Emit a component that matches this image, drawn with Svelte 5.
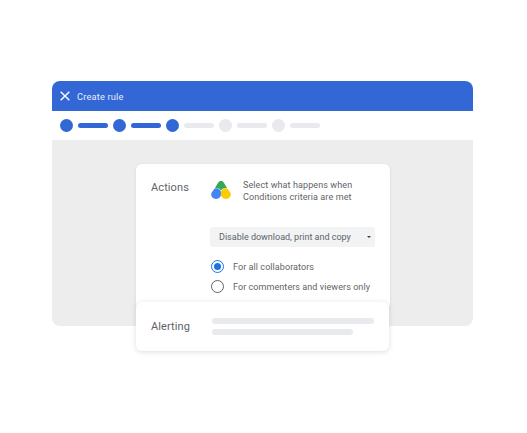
<script>
  const steps = [
    { done: true },
    { done: true },
    { done: true },
    { done: false },
    { done: false }
  ];
</script>

<main>
  <section class="window">
    <header class="titlebar">
      <svg class="close" viewBox="0 0 10 10" width="10" height="10" aria-hidden="true">
        <path d="M0.7 0.7 9.3 9.3M9.3 0.7 0.7 9.3" />
      </svg>
      <span>Create rule</span>
    </header>

    <div class="stepper">
      {#each steps as step, i}
        <span class="dot" class:done={step.done}></span>
        <span class="line" class:done={step.done && i < 2}></span>
      {/each}
    </div>

    <div class="panel">
      <div class="card actions">
        <div class="label">Actions</div>
        <div class="body">
          <div class="intro">
            <svg class="logo" viewBox="0 0 20 20" width="20" height="20" aria-hidden="true">
              <path d="M10 1C11.2 1 12.2 1.6 12.9 2.7L16 8C14.5 7.8 12.8 8 11.6 8.8L10 10.4 8.4 8.8C7.2 8 5.5 7.8 4 8L7.1 2.7C7.8 1.6 8.8 1 10 1Z" fill="#34a853" />
              <path d="M4.6 8.3C7.8 7.9 10.2 10.4 10.2 13.6C10.2 16.8 8 19 5 19C2.3 19 .2 17 .2 14.6C.2 13.7 .5 13 .9 12.3L3 9.2C3.4 8.7 4 8.4 4.6 8.3Z" fill="#4285f4" />
              <path d="M15.4 8.3C12.2 7.9 9.8 10.4 9.8 13.6C9.8 16.8 12 19 15 19C17.7 19 19.8 17 19.8 14.6C19.8 13.7 19.5 13 19.1 12.3L17 9.2C16.6 8.7 16 8.4 15.4 8.3Z" fill="#fbcc04" />
            </svg>
            <p>Select what happens when<br />Conditions criteria are met</p>
          </div>

          <div class="select">
            <span>Disable download, print and copy</span>
            <i class="caret"></i>
          </div>

          <div class="radios">
            <div class="radio">
              <span class="ring on"></span>
              <span>For all collaborators</span>
            </div>
            <div class="radio">
              <span class="ring"></span>
              <span>For commenters and viewers only</span>
            </div>
          </div>
        </div>
      </div>

      <div class="card alerting">
        <div class="label">Alerting</div>
        <div class="bars">
          <span class="bar long"></span>
          <span class="bar short"></span>
        </div>
      </div>
    </div>
  </section>
</main>

<style>
  :global(body) {
    background: #fff;
  }
  main {
    width: 527px;
    height: 433px;
    box-sizing: border-box;
    padding: 81px 54px 0 52px;
    font-family: Roboto, "Liberation Sans", sans-serif;
    color: #5f6368;
    overflow: hidden;
  }
  .window {
    width: 421px;
  }
  .titlebar {
    height: 30px;
    background: #3367d6;
    border-radius: 8px 8px 0 0;
    display: flex;
    align-items: center;
    gap: 7px;
    padding-left: 8px;
    color: #e8eefb;
    font-size: 9.2px;
    letter-spacing: 0.2px;
  }
  .close {
    stroke: #fff;
    stroke-width: 1.4;
    fill: none;
  }
  .stepper {
    height: 29px;
    display: flex;
    align-items: center;
    padding-left: 8px;
  }
  .dot {
    width: 13px;
    height: 13px;
    border-radius: 50%;
    background: #e8eaed;
  }
  .dot.done {
    background: #3367d6;
  }
  .line {
    width: 30px;
    height: 5px;
    margin: 0 5px;
    border-radius: 3px;
    background: #e8eaed;
  }
  .line.done {
    background: #3367d6;
  }
  .panel {
    height: 186px;
    box-sizing: border-box;
    background: #ededed;
    border-radius: 0 0 8px 8px;
    padding: 24px 0 0 84px;
  }
  .card {
    background: #fff;
    border-radius: 6px;
    display: flex;
  }
  .actions {
    width: 254px;
    height: 146px;
    box-sizing: border-box;
    padding: 17px 15px 0;
    box-shadow: 0 1px 3px rgba(60, 64, 67, 0.12);
  }
  .label {
    width: 59px;
    font-size: 11px;
    line-height: 14px;
    letter-spacing: 0.1px;
  }
  .body {
    flex: 1;
  }
  .intro {
    display: flex;
    gap: 12px;
    margin-top: -1px;
  }
  .logo {
    flex: none;
    margin-left: 1px;
  }
  .intro p {
    margin: -1px 0 0;
    font-size: 9px;
    line-height: 12px;
    letter-spacing: 0.1px;
    white-space: nowrap;
  }
  .select {
    height: 20px;
    margin-top: 24px;
    background: #f1f3f4;
    border-radius: 3px;
    display: flex;
    align-items: center;
    justify-content: space-between;
    padding: 0 4px 0 9px;
    font-size: 9px;
    white-space: nowrap;
  }
  .caret {
    width: 0;
    height: 0;
    border: 2.2px solid transparent;
    border-top: 2.5px solid #3c4043;
    border-bottom: 0;
  }
  .radios {
    margin-top: 13px;
    display: flex;
    flex-direction: column;
    gap: 7px;
  }
  .radio {
    display: flex;
    align-items: center;
    gap: 9px;
    height: 13px;
    font-size: 9px;
    letter-spacing: 0.07px;
    white-space: nowrap;
  }
  .ring {
    width: 13px;
    height: 13px;
    box-sizing: border-box;
    margin-left: 1px;
    border: 1.3px solid #5f6368;
    border-radius: 50%;
    display: flex;
    align-items: center;
    justify-content: center;
  }
  .ring.on {
    border-color: #1a73e8;
  }
  .ring.on::after {
    content: "";
    width: 7px;
    height: 7px;
    border-radius: 50%;
    background: #1a73e8;
  }
  .alerting {
    position: relative;
    width: 253px;
    height: 49px;
    box-sizing: border-box;
    margin-top: -8px;
    padding: 0 15px;
    align-items: center;
    box-shadow: 0 1px 5px rgba(60, 64, 67, 0.18);
  }
  .alerting .label {
    width: 61px;
  }
  .bars {
    display: flex;
    flex-direction: column;
    gap: 5px;
  }
  .bar {
    height: 6px;
    border-radius: 3px;
    background: #e8eaed;
  }
  .long {
    width: 162px;
  }
  .short {
    width: 141px;
  }
</style>
